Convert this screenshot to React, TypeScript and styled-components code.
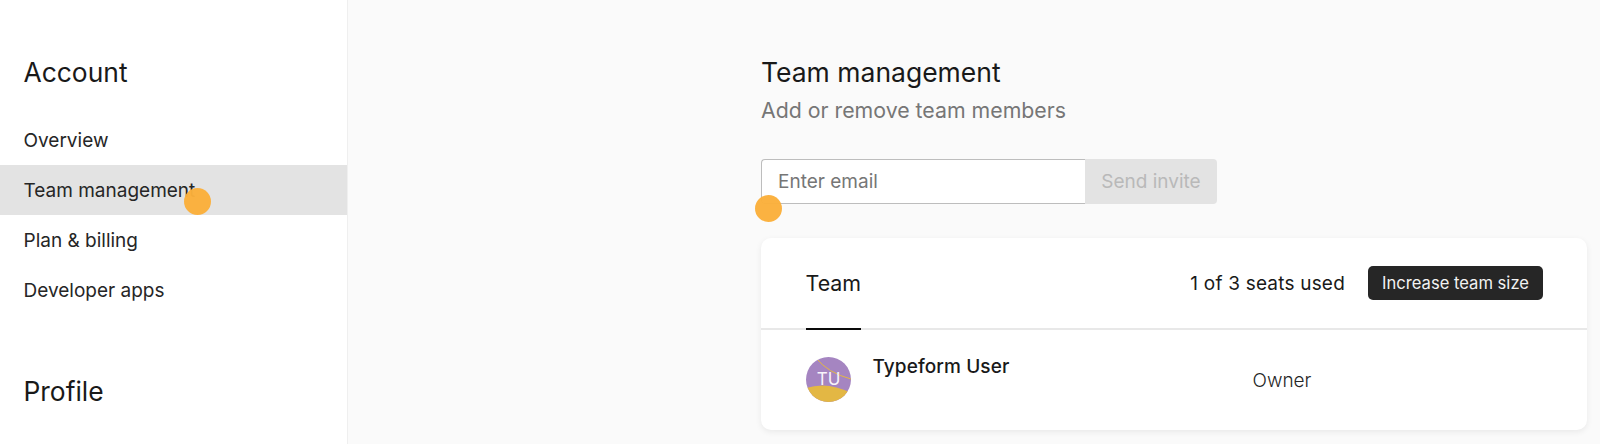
import React from "react";
import styled, { createGlobalStyle } from "styled-components";

const Global = createGlobalStyle`
  html, body { margin: 0; padding: 0; height: 444px; overflow: hidden; background: #fafafa; }
  * { box-sizing: border-box; }
  body { font-family: Inter, "Liberation Sans", sans-serif; color: #1a1a1a; -webkit-font-smoothing: antialiased; }
`;

const Page = styled.div`
  display: flex;
  width: 1600px;
  height: 444px;
  overflow: hidden;
  position: relative;
`;
const Sidebar = styled.nav`
  width: 348px;
  flex: none;
  background: #fff;
  border-right: 1px solid #efefef;
  padding-top: 55px;
`;
const NavTitle = styled.h2`
  margin: 0 0 25px 23.5px;
  font-size: 26.4px;
  line-height: 35px;
  font-weight: 400;
  color: #191919;
`;
const NavList = styled.div`
  display: flex;
  flex-direction: column;
  margin-bottom: 59px;
`;
const NavItem = styled.div<{ $active?: boolean }>`
  height: 50px;
  line-height: 52px;
  padding-left: 23.5px;
  font-size: 19px;
  color: #262626;
  background: ${(p) => (p.$active ? "#e3e3e3" : "transparent")};
`;
const Main = styled.main`
  flex: 1;
  padding: 55px 13px 0 413px;
  display: flex;
  flex-direction: column;
`;
const Title = styled.h1`
  margin: 0;
  font-size: 26.5px;
  line-height: 35px;
  font-weight: 400;
  color: #191919;
`;
const Subtitle = styled.p`
  margin: 5px 0 0;
  font-size: 21.3px;
  line-height: 30px;
  color: #767676;
`;
const InviteRow = styled.div`
  display: flex;
  margin-top: 34px;
  height: 45px;
  width: 456px;
`;
const EmailField = styled.div`
  width: 324px;
  display: flex;
  align-items: center;
  padding-left: 16px;
  font-size: 19px;
  color: #767676;
  background: #fff;
  border: 1px solid #bdbdbd;
  border-right: none;
  border-radius: 4px 0 0 4px;
`;
const SendButton = styled.div`
  flex: 1;
  display: flex;
  align-items: center;
  justify-content: center;
  font-size: 19px;
  color: #b9b9b9;
  background: #e3e3e3;
  border-radius: 0 4px 4px 0;
`;
const Card = styled.section`
  margin-top: 34px;
  height: 192px;
  background: #fff;
  border-radius: 10px;
  box-shadow: 0 2px 6px rgba(0, 0, 0, 0.07);
`;
const CardHeader = styled.header`
  height: 92px;
  padding: 0 44px 0 44.5px;
  display: flex;
  align-items: stretch;
  justify-content: space-between;
  border-bottom: 2px solid #e8e8e8;
`;
const Tab = styled.div`
  height: 92px;
  line-height: 90px;
  font-size: 21.4px;
  font-weight: 400;
  color: #191919;
  border-bottom: 2px solid #0a0a0a;
`;
const SeatInfo = styled.div`
  display: flex;
  align-items: center;
  gap: 23px;
  height: 90px;
`;
const SeatText = styled.span`
  font-size: 19px;
  font-weight: 400;
  letter-spacing: 0.2px;
  color: #191919;
`;
const DarkButton = styled.div`
  height: 34px;
  width: 175px;
  display: flex;
  align-items: center;
  justify-content: center;
  font-size: 16.6px;
  color: #f2f2f2;
  background: #262626;
  border-radius: 5px;
`;
const MemberRow = styled.div`
  display: grid;
  grid-template-columns: 67px 380px 1fr;
  padding: 27px 0 0 44.5px;
`;
const Avatar = styled.svg`
  width: 45px;
  height: 45px;
  display: block;
`;
const MemberName = styled.div`
  font-size: 19px;
  font-weight: 450;
  letter-spacing: 0.1px;
  line-height: 19px;
  color: #191919;
`;
const Role = styled.div`
  font-size: 19px;
  font-weight: 300;
  line-height: 47px;
  color: #262626;
`;
const Cursor = styled.div<{ $x: number; $y: number }>`
  position: absolute;
  left: ${(p) => p.$x}px;
  top: ${(p) => p.$y}px;
  width: 27px;
  height: 27px;
  border-radius: 50%;
  background: #fbb03b;
  opacity: 0.97;
`;

export default function App() {
  return (
    <Page>
      <Global />
      <Sidebar>
        <NavTitle>Account</NavTitle>
        <NavList>
          <NavItem>Overview</NavItem>
          <NavItem $active>Team management</NavItem>
          <NavItem>Plan &amp; billing</NavItem>
          <NavItem>Developer apps</NavItem>
        </NavList>
        <NavTitle>Profile</NavTitle>
      </Sidebar>
      <Main>
        <Title>Team management</Title>
        <Subtitle>Add or remove team members</Subtitle>
        <InviteRow>
          <EmailField>Enter email</EmailField>
          <SendButton>Send invite</SendButton>
        </InviteRow>
        <Card>
          <CardHeader>
            <Tab>Team</Tab>
            <SeatInfo>
              <SeatText>1 of 3 seats used</SeatText>
              <DarkButton>Increase team size</DarkButton>
            </SeatInfo>
          </CardHeader>
          <MemberRow>
            <Avatar viewBox="0 0 45 45">
              <defs>
                <clipPath id="avatarClip">
                  <circle cx="22.5" cy="22.5" r="22.5" />
                </clipPath>
              </defs>
              <g clipPath="url(#avatarClip)">
                <rect width="45" height="45" fill="#a585c1" />
                <path d="M0 31 Q 22 24 45 36 V45 H0 Z" fill="#e3b744" />
                <path d="M10 1 Q 22 16 45 22" fill="none" stroke="#e3b744" strokeWidth="1" />
              </g>
              <text x="22.5" y="27.5" textAnchor="middle" fontFamily="Inter, sans-serif" fontSize="17" fill="#f8f4fb">TU</text>
            </Avatar>
            <MemberName>Typeform User</MemberName>
            <Role>Owner</Role>
          </MemberRow>
        </Card>
      </Main>
      <Cursor $x={184} $y={188} />
      <Cursor $x={755} $y={195} />
    </Page>
  );
}
